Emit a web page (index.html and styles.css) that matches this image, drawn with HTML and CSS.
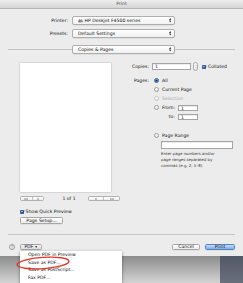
FILE: index.html
```html
<!DOCTYPE html>
<html lang="en">
<head>
    <meta charset="UTF-8">
    <title>Print</title>
    <link rel="stylesheet" href="styles.css">
</head>
<body>
<div class="screen">
    <div class="dialog">
        <div class="titlebar">Print</div>

        <div class="top">
            <span class="label">Printer:</span>
            <div class="popup">
                <span class="popup-text">
                    <svg class="printer" viewBox="0 0 10 8" width="5" height="4"><rect x="2.5" y="0" width="5" height="3" fill="#fff" stroke="#555" stroke-width="0.8"/><rect x="0.5" y="2.5" width="9" height="4" rx="1" fill="#777"/><rect x="2.5" y="5" width="5" height="2.5" fill="#fff" stroke="#555" stroke-width="0.6"/></svg>
                    HP Deskjet F4500 series
                </span>
                <svg class="arrows" viewBox="0 0 4 7" width="2.5" height="4.5"><path d="M0 3 L2 0 L4 3 Z M0 4 L2 7 L4 4 Z" fill="#444"/></svg>
            </div>
            <span class="label">Presets:</span>
            <div class="popup">
                <span class="popup-text">Default Settings</span>
                <svg class="arrows" viewBox="0 0 4 7" width="2.5" height="4.5"><path d="M0 3 L2 0 L4 3 Z M0 4 L2 7 L4 4 Z" fill="#444"/></svg>
            </div>
        </div>

        <div class="section">
            <div class="rule left"></div>
            <div class="popup">
                <span class="popup-text">Copies &amp; Pages</span>
                <svg class="arrows" viewBox="0 0 4 7" width="2.5" height="4.5"><path d="M0 3 L2 0 L4 3 Z M0 4 L2 7 L4 4 Z" fill="#444"/></svg>
            </div>
            <div class="rule"></div>
        </div>

        <div class="main">
            <div class="preview">
                <div class="paper"></div>
                <div class="nav">
                    <div class="seg first">
                        <span><svg viewBox="0 0 8 4" width="4" height="2"><path d="M0 2 L3 0 L3 4 Z M4 2 L7 0 L7 4 Z" fill="#666"/></svg></span>
                        <span><svg viewBox="0 0 4 4" width="2" height="2"><path d="M0 2 L3 0 L3 4 Z" fill="#666"/></svg></span>
                    </div>
                    <span class="count">1 of 1</span>
                    <div class="seg last">
                        <span><svg viewBox="0 0 4 4" width="2" height="2"><path d="M4 2 L1 0 L1 4 Z" fill="#666"/></svg></span>
                        <span><svg viewBox="0 0 8 4" width="4" height="2"><path d="M4 2 L1 0 L1 4 Z M8 2 L5 0 L5 4 Z" fill="#666"/></svg></span>
                    </div>
                </div>
                <div class="check-row">
                    <span class="checkbox"><svg viewBox="0 0 4 4" width="4" height="4"><path d="M0.8 2 L1.7 3.1 L3.3 0.7" fill="none" stroke="#1b2f55" stroke-width="0.7"/></svg></span>
                    <span>Show Quick Preview</span>
                </div>
                <div class="btn setup">Page Setup...</div>
            </div>

            <div class="options">
                <div class="copies">
                    <span class="lbl">Copies:</span>
                    <div class="field wide">1</div>
                    <div class="stepper">
                        <svg viewBox="0 0 4 7" width="2" height="4.5"><path d="M0 2.5 L2 0.5 L4 2.5 M0 4.5 L2 6.5 L4 4.5" fill="none" stroke="#777" stroke-width="0.7"/></svg>
                    </div>
                    <span class="checkbox collated"><svg viewBox="0 0 4 4" width="4" height="4"><path d="M0.8 2 L1.7 3.1 L3.3 0.7" fill="none" stroke="#1b2f55" stroke-width="0.7"/></svg></span>
                    <span class="check-text">Collated</span>
                </div>

                <div class="pages">
                    <span class="lbl">Pages:</span>
                    <div class="choices">
                        <div class="opt"><span class="radio on"></span>All</div>
                        <div class="opt"><span class="radio"></span>Current Page</div>
                        <div class="opt disabled"><span class="radio"></span>Selection</div>
                        <div class="range">
                            <span class="radio"></span>
                            <span class="range-lbl">From:</span>
                            <div class="field small">1</div>
                            <span></span>
                            <span class="range-lbl">to:</span>
                            <div class="field small">1</div>
                        </div>
                        <div class="opt page-range"><span class="radio"></span>Page Range</div>
                        <div class="field range-field"></div>
                        <p class="help">Enter page numbers and/or<br>page ranges separated by<br>commas (e.g. 2, 5–8)</p>
                    </div>
                </div>
            </div>
        </div>

        <div class="sep"></div>

        <div class="bottom">
            <span class="help-btn">?</span>
            <div class="btn pdf">PDF <svg viewBox="0 0 4 3" width="2.5" height="2"><path d="M0 0 L4 0 L2 3 Z" fill="#444"/></svg></div>
            <div class="spacer"></div>
            <div class="btn cancel">Cancel</div>
            <div class="btn print">Print</div>
        </div>
    </div>

    <div class="desk">
        <div class="desk-gray"></div>
        <div class="desk-dark"></div>
    </div>

    <!-- PDF menu opened over the dialog -->
    <ul class="menu">
        <li>Open PDF in Preview</li>
        <li>Save as PDF…</li>
        <li>Save as PostScript…</li>
        <li>Fax PDF…</li>
    </ul>
    <svg class="mark" viewBox="0 0 58 16" width="58" height="16"><ellipse cx="28" cy="8" rx="26" ry="5.6" fill="none" stroke="#e2362a" stroke-width="1.4" transform="rotate(-4 28 8)"/></svg>
</div>
</body>
</html>
```

FILE: styles.css
```css
* {
    margin: 0;
    padding: 0;
    box-sizing: border-box;
}

body {
    width: 243px;
    height: 283px;
    overflow: hidden;
    font-family: 'DejaVu Sans', sans-serif;
    font-size: 4.6px;
    color: #111;
}

.screen {
    position: relative;
    width: 243px;
    height: 283px;
    overflow: hidden;
    background-color: #8a8a8a;
}

.dialog {
    height: 256px;
    background-color: #ececec;
    display: flex;
    flex-direction: column;
}

.titlebar {
    height: 9px;
    line-height: 8px;
    text-align: center;
    color: #4d4d4d;
    background: linear-gradient(#eeeeee, #d5d5d5);
    border-bottom: 1px solid #b4b4b4;
}

.top {
    display: grid;
    grid-template-columns: 68px 103px;
    grid-auto-rows: 9px;
    column-gap: 4px;
    row-gap: 4px;
    align-items: center;
    padding-top: 7px;
}

.label {
    text-align: right;
}

.popup {
    display: flex;
    align-items: center;
    justify-content: space-between;
    width: 103px;
    height: 9px;
    padding: 0 3px 0 5px;
    background: linear-gradient(#ffffff, #f0f0f0);
    border: 1px solid #aeaeae;
    border-radius: 2px;
    box-shadow: 0 0.5px 0.5px rgba(0, 0, 0, 0.12);
}

.popup-text {
    display: flex;
    align-items: center;
    gap: 1.5px;
}

.section {
    display: flex;
    align-items: center;
    margin-top: 7px;
    padding: 0 8px;
}

.rule {
    flex: 1;
    height: 1px;
    background-color: #c4c4c4;
}

.rule.left {
    flex: none;
    width: 64px;
}

.main {
    display: flex;
    height: 171px;
    margin-top: 9px;
}

.preview {
    width: 120px;
    padding-left: 20px;
    display: flex;
    flex-direction: column;
    align-items: flex-start;
}

.paper {
    width: 91px;
    height: 129px;
    background-color: #fff;
    box-shadow: 0 0 1.5px rgba(0, 0, 0, 0.35);
}

.nav {
    width: 100px;
    height: 5px;
    margin-top: 4px;
    display: flex;
    align-items: center;
    justify-content: space-between;
}

.seg {
    display: flex;
    height: 5px;
    border: 0.5px solid #b0b0b0;
    border-radius: 1.5px;
    background: linear-gradient(#ffffff, #ececec);
}

.seg.first {
    width: 24px;
}

.seg.last {
    width: 32px;
}

.seg span {
    flex: 1;
    display: flex;
    align-items: center;
    justify-content: center;
}

.seg span + span {
    border-left: 0.5px solid #c0c0c0;
}

.count {
    margin-left: 6px;
}

.check-row {
    display: flex;
    align-items: center;
    gap: 1.5px;
    height: 5px;
    margin-top: 8px;
}

.checkbox {
    display: block;
    width: 4px;
    height: 4px;
    border-radius: 0.8px;
    background: linear-gradient(#8fc1f3, #3d7fd6);
    border: 0.4px solid #3b62a0;
}

.checkbox svg {
    display: block;
    margin: -0.4px;
}

.btn {
    display: flex;
    align-items: center;
    justify-content: center;
    height: 7px;
    border: 0.6px solid #a6a6a6;
    border-radius: 1.5px;
    background: linear-gradient(#ffffff, #ececec);
    box-shadow: 0 0.5px 0.5px rgba(0, 0, 0, 0.1);
}

.setup {
    width: 43px;
    margin-top: 3px;
}

.options {
    width: 123px;
}

.copies {
    display: flex;
    align-items: center;
    height: 7px;
}

.lbl {
    width: 29px;
    text-align: right;
}

.copies .lbl {
    margin-right: 3px;
}

.field {
    height: 7px;
    line-height: 6px;
    padding-left: 2px;
    background-color: #fff;
    border: 0.6px solid #a4a4a4;
    box-shadow: inset 0 0.5px 0.5px rgba(0, 0, 0, 0.15);
}

.field.wide {
    width: 39px;
}

.stepper {
    display: flex;
    align-items: center;
    justify-content: center;
    width: 5px;
    height: 9px;
    margin-left: 2px;
    border: 0.6px solid #a8a8a8;
    border-radius: 2.5px;
    background: linear-gradient(#ffffff, #ebebeb);
}

.collated {
    margin-left: 4px;
}

.check-text {
    margin-left: 2px;
}

.pages {
    display: grid;
    grid-template-columns: 29px auto;
    column-gap: 5px;
    margin-top: 6px;
}

.pages .lbl {
    line-height: 9px;
}

.opt {
    display: flex;
    align-items: center;
    gap: 3px;
    height: 9px;
}

.opt.disabled {
    color: #a8a8a8;
}

.radio {
    display: block;
    width: 5px;
    height: 5px;
    border-radius: 50%;
    border: 0.5px solid #9a9a9a;
    background: linear-gradient(#ffffff, #e6e6e6);
}

.opt.disabled .radio {
    border-color: #c8c8c8;
}

.radio.on {
    border-color: #3b62a0;
    background: radial-gradient(circle, #15203a 0 0.8px, transparent 1.1px), linear-gradient(#95c5f5, #3f82d8);
}

.range {
    display: grid;
    grid-template-columns: 5px auto 20px;
    grid-auto-rows: 9px;
    column-gap: 3px;
    align-items: center;
    justify-content: start;
}

.range-lbl {
    text-align: right;
}

.field.small {
    height: 6px;
    line-height: 5px;
}

.page-range {
    margin-top: 10px;
}

.range-field {
    width: 72px;
    height: 8px;
    margin: 1px 0 0 7px;
}

.help {
    margin: 2px 0 0 7px;
    font-size: 3.9px;
    line-height: 6px;
    color: #333;
}

.sep {
    height: 1px;
    margin: 0 8px;
    background-color: #c6c6c6;
}

.bottom {
    display: flex;
    align-items: center;
    height: 7px;
    margin-top: 8px;
    padding: 0 8px 0 9px;
}

.help-btn {
    display: flex;
    align-items: center;
    justify-content: center;
    width: 6px;
    height: 6px;
    border-radius: 50%;
    border: 0.5px solid #9a9a9a;
    background: linear-gradient(#ffffff, #e8e8e8);
    font-size: 4px;
    color: #555;
}

.pdf {
    width: 22px;
    height: 6px;
    margin-left: 5px;
    gap: 1.5px;
    background: linear-gradient(#f4f4f4, #dcdcdc);
}

.spacer {
    flex: 1;
}

.cancel {
    width: 28px;
    height: 6px;
}

.print {
    width: 30px;
    height: 6px;
    margin-left: 5px;
    border-color: #5a83bd;
    background: linear-gradient(#c4dcf7, #79aeea);
}

.desk {
    display: flex;
    height: 27px;
}

.desk-gray {
    flex: 1;
    background: linear-gradient(#8c8c8c, #d4d4d4);
}

.desk-dark {
    width: 23px;
    background: linear-gradient(#515866, #6a707c);
}

.menu {
    position: absolute;
    left: 20px;
    top: 251px;
    width: 102px;
    height: 34px;
    list-style: none;
    padding-left: 8px;
    background-color: #fff;
    box-shadow: 0 1px 3px rgba(0, 0, 0, 0.45);
}

.menu li {
    line-height: 7.7px;
}

.mark {
    position: absolute;
    left: 15px;
    top: 255px;
}
```
